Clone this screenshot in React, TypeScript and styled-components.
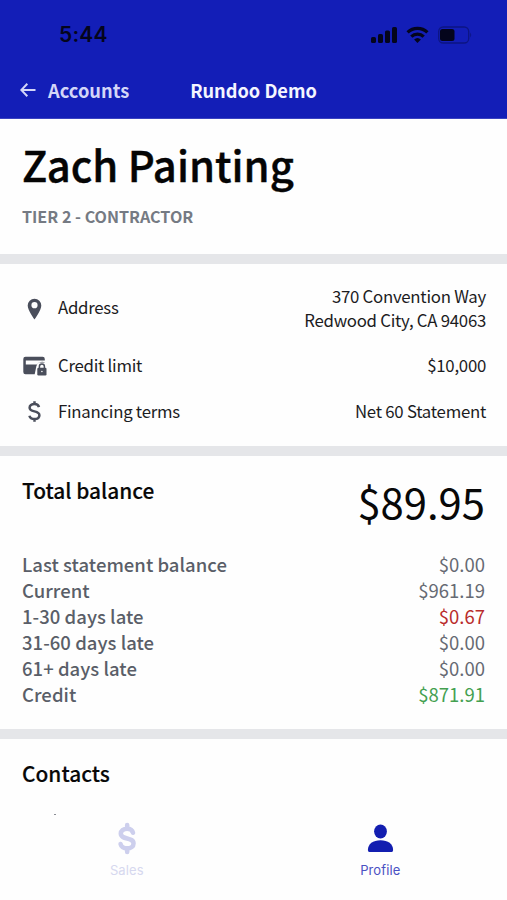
import React from "react";
import styled, { createGlobalStyle } from "styled-components";

const GlobalStyle = createGlobalStyle`
  *, *::before, *::after { box-sizing: border-box; }
  body {
    margin: 0;
    background: #fefefe;
    font-family: "Noto Sans CJK SC", "Noto Sans", sans-serif;
    color: #1c1c1e;
  }
  h1, h2, p { margin: 0; }
  svg { display: block; flex: none; }
`;

const Screen = styled.div`
  display: flex;
  flex-direction: column;
  width: 507px;
  height: 900px;
  overflow: hidden;
  background: #fefefe;
  white-space: nowrap;
`;

const Header = styled.header`
  height: 119px;
  flex: none;
  background: #131eb7;
  border-bottom: 1px solid #3a43c0;
`;

const StatusBar = styled.div`
  display: flex;
  align-items: center;
  justify-content: space-between;
  height: 69px;
  padding: 0 35px 0 59px;
  color: #04051c;
`;

const Clock = styled.span`
  font-family: Inter, sans-serif;
  font-size: 21px;
  font-weight: 600;
  letter-spacing: 0.2px;
`;

const StatusIcons = styled.div`
  display: flex;
  align-items: center;
`;

const NavBar = styled.nav`
  display: grid;
  grid-template-columns: 1fr auto 1fr;
  align-items: center;
  height: 42px;
  padding: 0 20px;
`;

const Back = styled.span`
  display: flex;
  align-items: center;
  gap: 12px;
  color: #d3d6f8;
  font-size: 18.3px;
  font-weight: 700;
  line-height: 26px;
`;

const NavTitle = styled.span`
  color: #f4f5ff;
  font-size: 18.2px;
  font-weight: 700;
  line-height: 26px;
`;

const Section = styled.section<{ $height: number; $top: number }>`
  flex: none;
  height: ${(p) => p.$height}px;
  padding: ${(p) => p.$top}px 22px 0;
`;

const Divider = styled.div`
  flex: none;
  height: 10px;
  background: #e5e6e9;
`;

const Name = styled.h1`
  color: #050505;
  font-size: 41.8px;
  font-weight: 500;
  line-height: 48px;
  -webkit-text-stroke: 0.4px #050505;
`;

const Tier = styled.p`
  margin-top: 16px;
  color: #757a83;
  font-size: 16.1px;
  font-weight: 700;
  line-height: 24px;
`;

const Details = styled.div`
  display: grid;
  row-gap: 22px;
`;

const DetailRow = styled.div`
  display: grid;
  grid-template-columns: 36px 1fr auto;
  align-items: center;
  font-size: 16.8px;
  letter-spacing: -0.26px;
  line-height: 23.5px;
`;

const DetailLabel = styled.span<{ $lift?: number }>`
  padding-bottom: ${(p) => p.$lift ?? 0}px;
`;

const DetailValue = styled.span`
  margin-right: -1px;
  text-align: right;
  white-space: pre-line;
`;

const BalanceTop = styled.div`
  display: flex;
  align-items: flex-start;
  justify-content: space-between;
`;

const Heading = styled.h2`
  color: #080808;
  font-size: 20.9px;
  font-weight: 500;
  line-height: 27px;
  -webkit-text-stroke: 0.15px #080808;
`;

const Total = styled.span`
  color: #080808;
  font-size: 41.8px;
  line-height: 48px;
`;

const Ledger = styled.div`
  margin-top: 26px;
`;

const LedgerRow = styled.div`
  display: flex;
  justify-content: space-between;
  font-size: 18.5px;
  line-height: 26px;
`;

const LedgerLabel = styled.span`
  color: #5a5e68;
  font-weight: 500;
  letter-spacing: 0.03px;
`;

const tones = { neutral: "#666a73", late: "#b92c2c", credit: "#43a050" };

const Amount = styled.span<{ $tone: keyof typeof tones }>`
  color: ${(p) => tones[p.$tone]};
`;

const ListPeek = styled.div`
  width: 2px;
  height: 1px;
  margin: 27px 0 0 32px;
  background: #8a8d94;
`;

const TabBar = styled.nav`
  display: grid;
  grid-template-columns: 1fr 1fr;
  flex: 1;
  background: #fefefe;
`;

const Tab = styled.div<{ $active?: boolean }>`
  display: flex;
  flex-direction: column;
  align-items: center;
  padding-top: 5px;
  gap: 6px;
  color: ${(p) => (p.$active ? "#131eb0" : "#cdcfed")};
  font-family: Inter, sans-serif;
  font-size: 13px;
  line-height: 16px;
`;

const TabLabel = styled.span<{ $active?: boolean }>`
  color: ${(p) => (p.$active ? "#4a51c3" : "#d6d8ef")};
  letter-spacing: 0.1px;
`;

const SignalIcon = () => (
  <svg width="26" height="18" viewBox="0 0 26 18" fill="currentColor">
    <rect x="0" y="11" width="5" height="6" rx="1.6" />
    <rect x="7" y="8" width="5" height="9" rx="1.6" />
    <rect x="14" y="4.5" width="5" height="12.5" rx="1.6" />
    <rect x="21" y="1" width="5" height="16" rx="1.6" />
  </svg>
);

const WifiIcon = styled.svg`
  margin-left: 9px;
`;

const BatteryIcon = styled.svg`
  margin-left: 9px;
`;

const PinIcon = () => (
  <svg width="25" height="22" viewBox="0 0 25 22" fill="#4a4e5b">
    <path
      fillRule="evenodd"
      d="M12.5 .7a6.800 6.800 0 0 0-6.800 6.800c0 4.800 6.800 13.900 6.800 13.900s6.800-9.100 6.800-13.900A6.800 6.800 0 0 0 12.500 .7Zm0 3.400a3.100 3.100 0 1 1 0 6.200 3.100 3.100 0 0 1 0-6.200Z"
    />
  </svg>
);

const CardLockIcon = () => (
  <svg width="25" height="20" viewBox="0 0 25 20">
    <path
      fill="#4a4e5b"
      fillRule="evenodd"
      d="M3.500 .800H20.600a2.200 2.200 0 0 1 2.200 2.200V6.300a6 6 0 0 0-8.400 3.600L12.700 18.200H3.500a2.200 2.200 0 0 1-2.200-2.200V3A2.200 2.200 0 0 1 3.500 .800ZM3.800 4.500V8.500H15.200L17 6.500H22.800V4.500Z"
    />
    <rect x="15.300" y="11.800" width="9.200" height="7.700" rx="1.200" fill="#4a4e5b" />
    <path d="M17.400 12V10.400a2.500 2.500 0 0 1 5 0V12" fill="none" stroke="#4a4e5b" strokeWidth="1.500" />
    <circle cx="19.900" cy="15.500" r=".8" fill="#fefefe" />
  </svg>
);

const dollarPath =
  "M17 7.600C16.500 5.600 14.800 4.500 12.500 4.500 9.600 4.500 7.600 6 7.600 8.200 7.600 13.200 17.400 10.600 17.400 15.700 17.400 18 15.400 19.500 12.500 19.500 9.800 19.500 7.900 18.200 7.400 16.200M12.500 1.700V4.500M12.500 19.500V22.300";

const DollarIcon = () => (
  <svg width="24" height="21" viewBox="0 1.500 24 21" fill="none" stroke="#4a4e5b" strokeWidth="2.500">
    <path d={dollarPath} />
  </svg>
);

const SalesIcon = () => (
  <svg width="36" height="35" viewBox="-.4 0 25.800 24.500" fill="none" stroke="currentColor" strokeWidth="3.500" strokeLinecap="round">
    <path d={dollarPath} transform="translate(1 1) scale(.93 .94)" />
  </svg>
);

const ProfileIcon = () => (
  <svg width="28" height="35" viewBox="-1.500 -1 28 35" fill="currentColor">
    <ellipse cx="13" cy="9.500" rx="6.400" ry="7" />
    <path d="M.4 28C.4 22 5.500 18.300 13 18.300S25.600 22 25.600 28Q25.600 30 24.200 30H1.800Q.4 30 .4 28Z" />
  </svg>
);

const ledger: { label: string; amount: string; tone: keyof typeof tones }[] = [
  { label: "Last statement balance", amount: "$0.00", tone: "neutral" },
  { label: "Current", amount: "$961.19", tone: "neutral" },
  { label: "1-30 days late", amount: "$0.67", tone: "late" },
  { label: "31-60 days late", amount: "$0.00", tone: "neutral" },
  { label: "61+ days late", amount: "$0.00", tone: "neutral" },
  { label: "Credit", amount: "$871.91", tone: "credit" },
];

export default function App() {
  return (
    <Screen>
      <GlobalStyle />
      <Header>
        <StatusBar>
          <Clock>5:44</Clock>
          <StatusIcons>
            <SignalIcon />
            <WifiIcon width="23" height="18" viewBox="0 0 23 18" fill="none" stroke="currentColor" strokeWidth="3.300">
              <path d="M1.600 6.400a14.300 14.300 0 0 1 19.800 0M5.300 10.600a9 9 0 0 1 12.400 0" />
              <path d="M11.500 17l-3.400-3.500a5 5 0 0 1 6.800 0Z" fill="currentColor" stroke="none" />
            </WifiIcon>
            <BatteryIcon width="34" height="18" viewBox="0 0 34 18">
              <rect x=".7" y="1" width="30" height="16" rx="4.500" fill="none" stroke="#0d1583" strokeWidth="1.300" />
              <rect x="2" y="3" width="14.500" height="12" rx="2.500" fill="currentColor" />
              <path d="M32.200 6.500q2 2.500 0 5Z" fill="#0d1583" />
            </BatteryIcon>
          </StatusIcons>
        </StatusBar>
        <NavBar>
          <Back>
            <svg width="16" height="14" viewBox="0 0 16 14" fill="none" stroke="currentColor" strokeWidth="2">
              <path d="M7.300 .8 1.300 7l6 6.200M1.300 7H15.500" />
            </svg>
            Accounts
          </Back>
          <NavTitle>Rundoo Demo</NavTitle>
        </NavBar>
      </Header>

      <Section $height={135} $top={21}>
        <Name>Zach Painting</Name>
        <Tier>TIER 2 - CONTRACTOR</Tier>
      </Section>
      <Divider />

      <Section $height={182} $top={21}>
        <Details>
          <DetailRow>
            <PinIcon />
            <DetailLabel $lift={2}>Address</DetailLabel>
            <DetailValue>{"370 Convention Way\nRedwood City, CA 94063"}</DetailValue>
          </DetailRow>
          <DetailRow>
            <CardLockIcon />
            <DetailLabel>Credit limit</DetailLabel>
            <DetailValue>$10,000</DetailValue>
          </DetailRow>
          <DetailRow>
            <DollarIcon />
            <DetailLabel>Financing terms</DetailLabel>
            <DetailValue>Net 60 Statement</DetailValue>
          </DetailRow>
        </Details>
      </Section>
      <Divider />

      <Section $height={273} $top={21}>
        <BalanceTop>
          <Heading>Total balance</Heading>
          <Total>$89.95</Total>
        </BalanceTop>
        <Ledger>
          {ledger.map((row) => (
            <LedgerRow key={row.label}>
              <LedgerLabel>{row.label}</LedgerLabel>
              <Amount $tone={row.tone}>{row.amount}</Amount>
            </LedgerRow>
          ))}
        </Ledger>
      </Section>
      <Divider />

      <Section $height={77} $top={21}>
        <Heading>Contacts</Heading>
        <ListPeek />
      </Section>

      <TabBar>
        <Tab>
          <SalesIcon />
          <TabLabel>Sales</TabLabel>
        </Tab>
        <Tab $active>
          <ProfileIcon />
          <TabLabel $active>Profile</TabLabel>
        </Tab>
      </TabBar>
    </Screen>
  );
}
